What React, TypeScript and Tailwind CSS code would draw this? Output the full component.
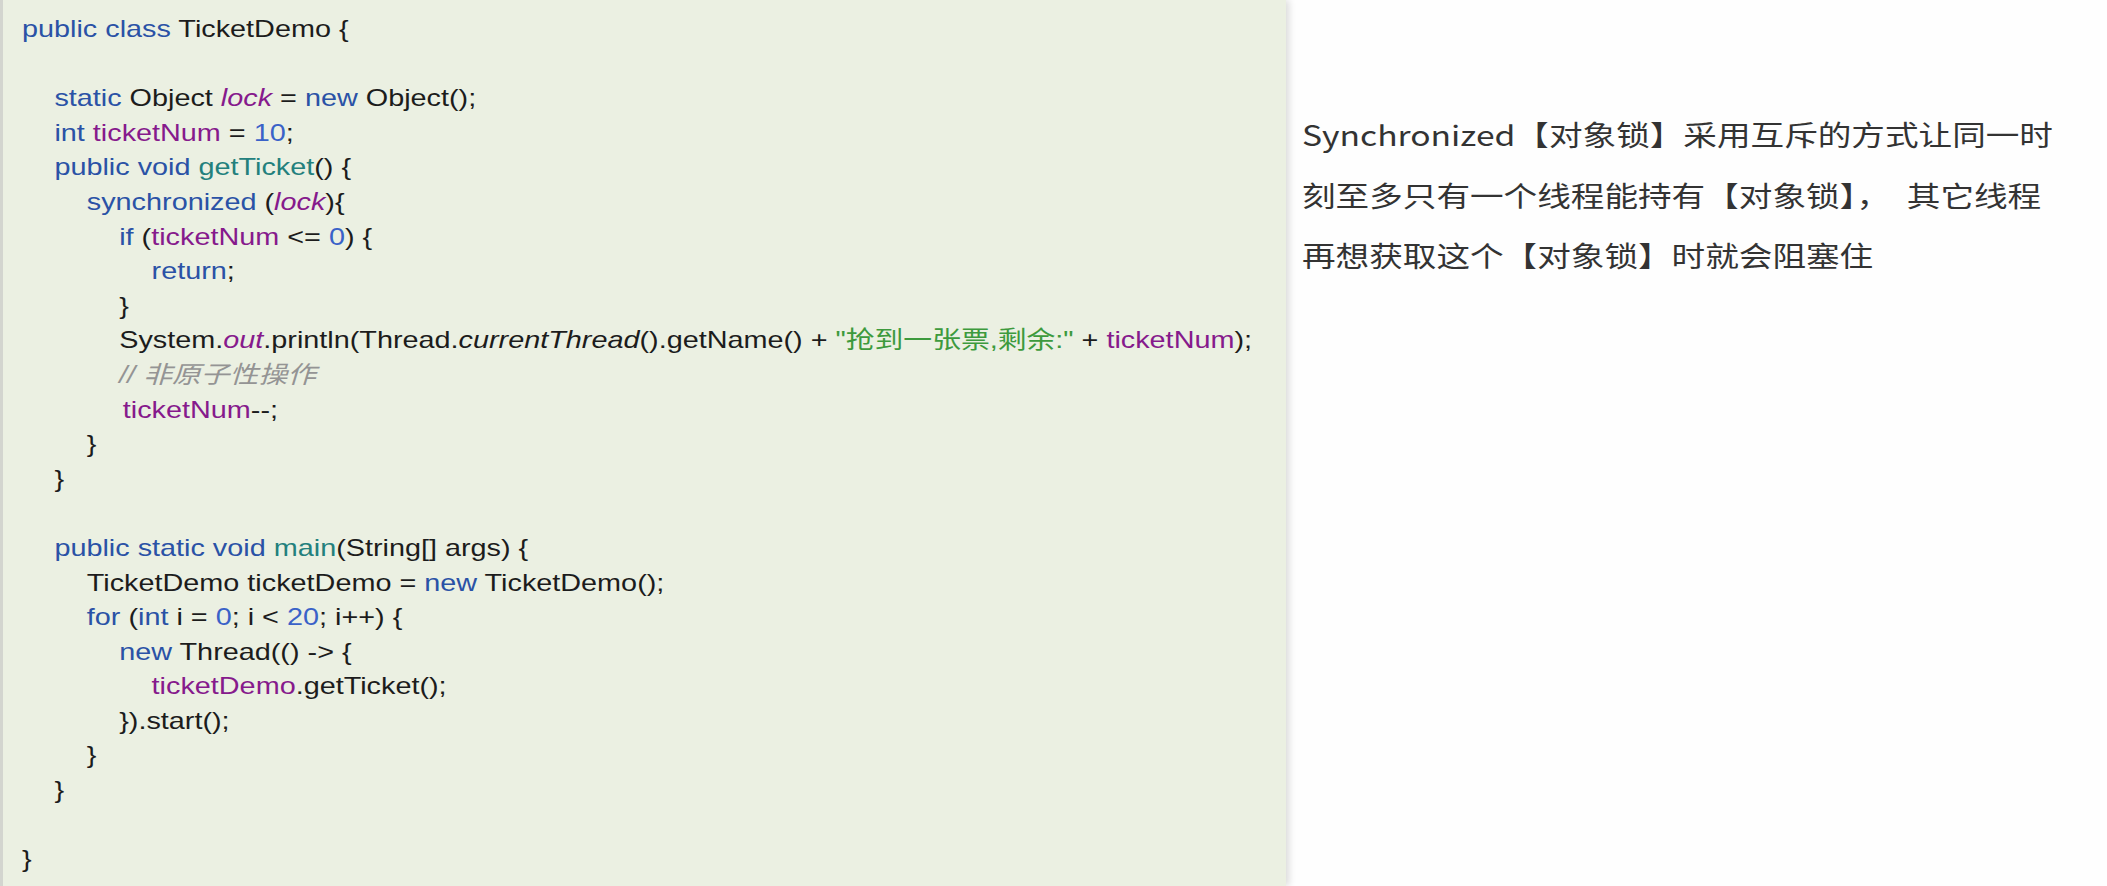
import React from "react";

type Tok = [string, string?];
type Line = { lvl: number; extra?: boolean; toks: Tok[] };

const K = "text-[#2a52a6]";
const N = "text-[#3a62c8]";
const F = "text-[#861a8c]";
const FI = "text-[#861a8c] italic";
const M = "text-[#23807d]";
const S = "text-[#3d9a3d]";
const C = "text-[#949494] italic";
const I = "italic";

const lines: Line[] = [
  { lvl: 0, toks: [["public class", K], [" TicketDemo {"]] },
  { lvl: 0, toks: [] },
  { lvl: 1, toks: [["static", K], [" Object "], ["lock", FI], [" = "], ["new", K], [" Object();"]] },
  { lvl: 1, toks: [["int", K], [" "], ["ticketNum", F], [" = "], ["10", N], [";"]] },
  { lvl: 1, toks: [["public void", K], [" "], ["getTicket", M], ["() {"]] },
  { lvl: 2, toks: [["synchronized", K], [" ("], ["lock", FI], ["){"]] },
  { lvl: 3, toks: [["if", K], [" ("], ["ticketNum", F], [" <= "], ["0", N], [") {"]] },
  { lvl: 4, toks: [["return", K], [";"]] },
  { lvl: 3, toks: [["}"]] },
  {
    lvl: 3,
    toks: [
      ["System."],
      ["out", FI],
      [".println(Thread."],
      ["currentThread", I],
      ["().getName() + "],
      ["\"抢到一张票,剩余:\"", S],
      [" + "],
      ["ticketNum", F],
      [");"],
    ],
  },
  { lvl: 3, toks: [["// 非原子性操作", C]] },
  { lvl: 3, extra: true, toks: [["ticketNum", F], ["--;"]] },
  { lvl: 2, toks: [["}"]] },
  { lvl: 1, toks: [["}"]] },
  { lvl: 0, toks: [] },
  { lvl: 1, toks: [["public static void", K], [" "], ["main", M], ["(String[] args) {"]] },
  { lvl: 2, toks: [["TicketDemo ticketDemo = "], ["new", K], [" TicketDemo();"]] },
  {
    lvl: 2,
    toks: [["for", K], [" ("], ["int", K], [" i = "], ["0", N], ["; i < "], ["20", N], ["; i++) {"]],
  },
  { lvl: 3, toks: [["new", K], [" Thread(() -> {"]] },
  { lvl: 4, toks: [["ticketDemo", F], [".getTicket();"]] },
  { lvl: 3, toks: [["}).start();"]] },
  { lvl: 2, toks: [["}"]] },
  { lvl: 1, toks: [["}"]] },
  { lvl: 0, toks: [] },
  { lvl: 0, toks: [["}"]] },
];

function indentClass(lvl: number, extra?: boolean) {
  if (extra) return "pl-[84px]";
  switch (lvl) {
    case 1:
      return "pl-[27px]";
    case 2:
      return "pl-[54px]";
    case 3:
      return "pl-[81px]";
    case 4:
      return "pl-[108px]";
    default:
      return "pl-0";
  }
}

export default function App() {
  return (
    <div className="flex h-[886px] w-[2107px] overflow-hidden bg-[#fefefe]">
      <div className="relative flex h-full w-[1286px] shrink-0 border-l-[3px] border-[#d3d5cf] bg-[#ebf0e2] pl-[19px] pt-[12px] shadow-[3px_0_7px_rgba(0,0,0,0.14)]">
        <div className="origin-left scale-x-[1.2] font-['Liberation_Sans','Noto_Sans_CJK_SC',sans-serif] text-[24px] leading-[34.6px] text-[#1c1c1c]">
          {lines.map((ln, i) => (
            <div key={i} className={"whitespace-pre " + indentClass(ln.lvl, ln.extra)}>
              {ln.toks.length === 0
                ? "\u00a0"
                : ln.toks.map((t, j) => (
                    <span key={j} className={t[1] ?? ""}>
                      {t[0]}
                    </span>
                  ))}
            </div>
          ))}
        </div>
      </div>
      <div className="flex-1 pl-[16px] pt-[104px]">
        <div className="origin-left scale-x-[1.2] whitespace-nowrap font-['Noto_Sans_CJK_SC',sans-serif] text-[28px] leading-[60.5px] text-[#333333]">
          <div>Synchronized【对象锁】采用互斥的方式让同一时</div>
          <div>
            刻至多只有一个线程能持有【对象锁】，<span className="ml-[14px]">其它线程</span>
          </div>
          <div>再想获取这个【对象锁】时就会阻塞住</div>
        </div>
      </div>
    </div>
  );
}
